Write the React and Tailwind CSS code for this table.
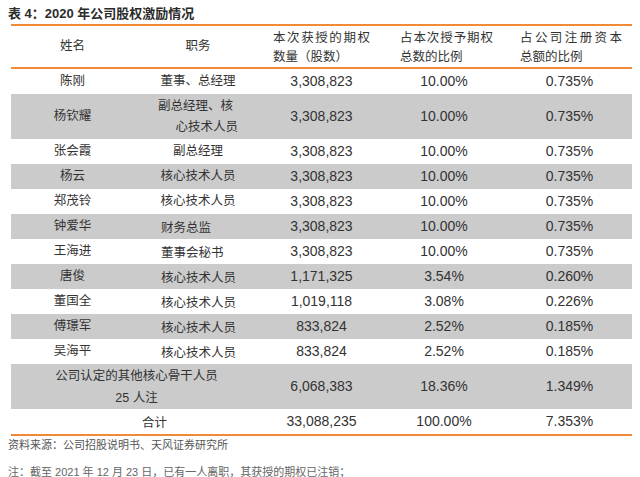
const rows = [
  { name: "陈刚", role: "董事、总经理", qty: "3,308,823", pct: "10.00%", cap: "0.735%" },
  { name: "杨钦耀", role: ["副总经理、核", "心技术人员"], qty: "3,308,823", pct: "10.00%", cap: "0.735%", gray: true },
  { name: "张会霞", role: "副总经理", qty: "3,308,823", pct: "10.00%", cap: "0.735%" },
  { name: "杨云", role: "核心技术人员", qty: "3,308,823", pct: "10.00%", cap: "0.735%", gray: true },
  { name: "郑茂铃", role: "核心技术人员", qty: "3,308,823", pct: "10.00%", cap: "0.735%" },
  { name: "钟爱华", role: "财务总监", qty: "3,308,823", pct: "10.00%", cap: "0.735%", gray: true, left: true },
  { name: "王海进", role: "董事会秘书", qty: "3,308,823", pct: "10.00%", cap: "0.735%", left: true },
  { name: "唐俊", role: "核心技术人员", qty: "1,171,325", pct: "3.54%", cap: "0.260%", gray: true, left: true },
  { name: "董国全", role: "核心技术人员", qty: "1,019,118", pct: "3.08%", cap: "0.226%", left: true },
  { name: "傅璟军", role: "核心技术人员", qty: "833,824", pct: "2.52%", cap: "0.185%", gray: true, left: true },
  { name: "吴海平", role: "核心技术人员", qty: "833,824", pct: "2.52%", cap: "0.185%", left: true },
];

// first header line is spread over a fixed width, like justified text
function Spread({ text, width }) {
  return (
    <div className="flex justify-between" style={{ width }}>
      {text.split("").map((ch, i) => (
        <span key={i}>{ch}</span>
      ))}
    </div>
  );
}

function Nums({ qty, pct, cap }) {
  return (
    <>
      <div className="w-[119px] flex items-center justify-center text-[14px]">{qty}</div>
      <div className="w-[126px] flex items-center justify-center text-[14px]">{pct}</div>
      <div className="w-[125px] flex items-center justify-center text-[14px]">{cap}</div>
    </>
  );
}

function Row({ r }) {
  const two = Array.isArray(r.role);
  return (
    <div className={`flex ${two ? "h-[45px]" : "h-[25px]"} ${r.gray ? "bg-[#cbcbcb]" : ""}`}>
      <div className="w-[123px] flex items-center justify-center">{r.name}</div>
      {two ? (
        <div className="w-[128px] flex items-center justify-center">
          <div className="w-[80px] flex flex-col leading-[21px]">
            <span className="self-start whitespace-nowrap">{r.role[0]}</span>
            <span className="self-end whitespace-nowrap">{r.role[1]}</span>
          </div>
        </div>
      ) : r.left ? (
        <div className="w-[128px] flex items-center pl-[27px] pt-[4px]">{r.role}</div>
      ) : (
        <div className="w-[128px] flex items-center justify-center">{r.role}</div>
      )}
      <Nums qty={r.qty} pct={r.pct} cap={r.cap} />
    </div>
  );
}

export default function App() {
  return (
    <div className="w-[640px] h-[477px] bg-white text-[#333] overflow-hidden font-['Liberation_Sans','Noto_Sans_CJK_SC',sans-serif]">
      <div className="h-[24px] pl-[8px] pt-[5px] leading-[18px] text-[13px] font-bold text-[#2b2b2b]">
        表 4：2020 年公司股权激励情况
      </div>

      <div className="ml-[11px] w-[621px] text-[12.5px] border-b-2 border-[#f08a34]">
        {/* header */}
        <div className="flex h-[45px] border-y-2 border-[#f08a34]">
          <div className="w-[123px] flex items-center justify-center">姓名</div>
          <div className="w-[128px] flex items-center justify-center">职务</div>
          <div className="w-[119px] pl-[11px] pt-[3px] leading-[19px]">
            <Spread text="本次获授的期权" width={97} />
            <div>数量（股数）</div>
          </div>
          <div className="w-[126px] pl-[19px] pt-[3px] leading-[19px]">
            <Spread text="占本次授予期权" width={93} />
            <div>总数的比例</div>
          </div>
          <div className="w-[125px] pl-[13px] pt-[3px] leading-[19px]">
            <Spread text="占公司注册资本" width={102} />
            <div>总额的比例</div>
          </div>
        </div>

        {rows.map((r) => (
          <Row key={r.name} r={r} />
        ))}

        <div className="flex h-[45px] bg-[#cbcbcb]">
          <div className="w-[251px] flex flex-col items-center justify-center leading-[22px]">
            <span>公司认定的其他核心骨干人员</span>
            <span>25 人注</span>
          </div>
          <Nums qty="6,068,383" pct="18.36%" cap="1.349%" />
        </div>

        <div className="flex h-[25px]">
          <div className="w-[251px] flex items-center justify-center pl-[36px] pt-[3px]">合计</div>
          <Nums qty="33,088,235" pct="100.00%" cap="7.353%" />
        </div>
      </div>

      <div className="pl-[8px] pt-[1px] text-[11px] leading-[16px] text-[#555]">
        资料来源：公司招股说明书、天风证券研究所
      </div>
      <div className="pl-[8px] pt-[11px] text-[11px] leading-[16px] text-[#666]">
        注：截至 2021 年 12 月 23 日，已有一人离职，其获授的期权已注销；
      </div>
    </div>
  );
}
